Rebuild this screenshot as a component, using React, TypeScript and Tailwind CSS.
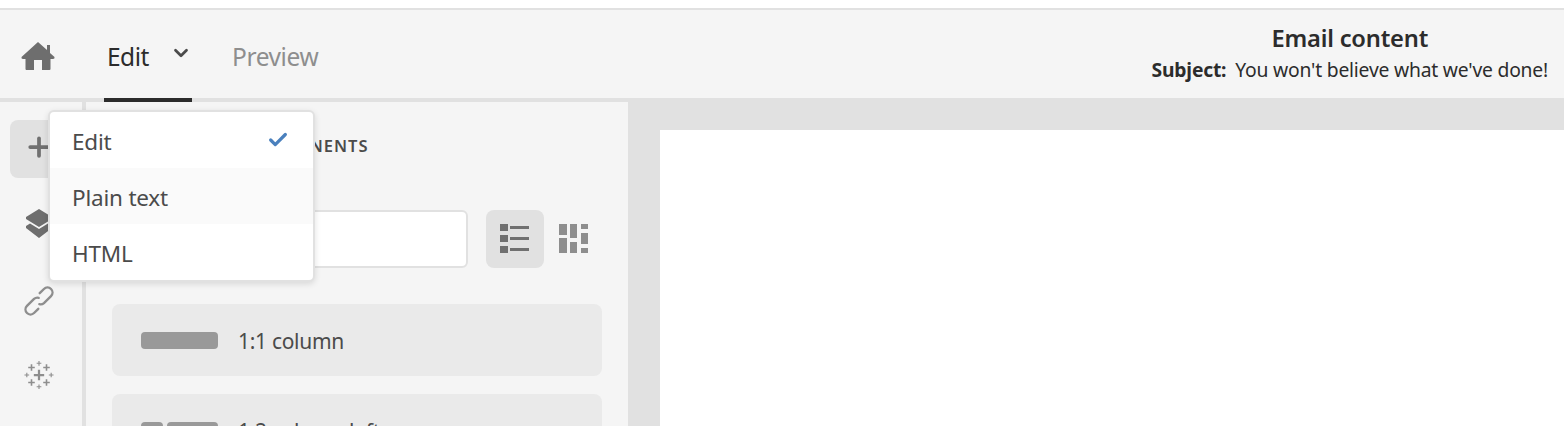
import React from 'react';
import { Check, ChevronDown, Plus } from 'lucide-react';

const font = { fontFamily: '"Noto Sans", sans-serif' };

const HomeIcon = () => (
  <svg width="34" height="30" viewBox="0 0 34 30" fill="#6e6e6e">
    <path d="M17 1 L26 9 V4 H29 V12 L33.500 16 Q34 18 32 18 H29.500 V28 Q29.500 29 28.500 29 H21 V19 H13 V29 H5.500 Q4.500 29 4.500 28 V18 H2 Q0 18 .5 16 Z" />
  </svg>
);

const LayersIcon = () => (
  <svg width="28" height="32" viewBox="0 0 28 32" fill="#6e6e6e">
    <path d="M14 1 L27 9 V11 L14 19 L1 11 V9 Z" />
    <path d="M1 18 L5 15.500 L14 21 L23 15.500 L27 18 V20 L14 30 L1 20 Z" />
  </svg>
);

const ChainIcon = () => (
  <svg width="30" height="30" viewBox="0 0 30 30" fill="none" stroke="#8e8e8e" strokeWidth="2.400" strokeLinecap="round">
    <g transform="rotate(-45 15 15)">
      <path d="M17 12.500a5 5 0 0 0-4-2.500H3a5 5 0 0 0 0 10H9" />
      <path d="M13 17.500a5 5 0 0 0 4 2.500H27a5 5 0 0 0 0-10H21" />
    </g>
  </svg>
);

const SparkleIcon = () => (
  <svg width="30" height="30" viewBox="0 0 32 32" fill="none" stroke="#8e8e8e" strokeLinecap="butt">
    <path d="M16 10.500v11M10.500 16h11" strokeWidth="2.400" />
    <path d="M8 4.500v7M4.500 8h7M24 4.500v7M20.500 8h7M8 20.500v7M4.500 24h7M24 20.500v7M20.500 24h7" strokeWidth="1.700" />
    <path d="M16 1v5M13.500 3.500h5M16 26v5M13.500 28.500h5M3 13.500v5M.5 16h5M29 13.500v5M26.500 16h5" strokeWidth="1.200" />
  </svg>
);

const ListIcon = () => (
  <svg width="30" height="30" viewBox="0 0 30 30" fill="#707070">
    <rect x="0" y="0" width="8" height="7" />
    <rect x="10" y="2" width="19" height="3" />
    <rect x="0" y="11" width="8" height="7" />
    <rect x="10" y="13" width="19" height="3" />
    <rect x="0" y="22" width="8" height="7" />
    <rect x="10" y="24" width="19" height="3" />
  </svg>
);

const GridIcon = () => (
  <svg width="30" height="30" viewBox="0 0 30 30" fill="#8e8e8e">
    <rect x="0" y="0" width="8" height="11" />
    <rect x="11" y="0" width="7" height="14" />
    <rect x="22" y="0" width="7" height="5" />
    <rect x="0" y="14" width="8" height="15" />
    <rect x="11" y="18" width="7" height="11" />
    <rect x="22" y="9" width="7" height="11" />
    <rect x="22" y="24" width="7" height="5" />
  </svg>
);

const menuItems = [
  { label: 'Edit', selected: true },
  { label: 'Plain text', hover: true },
  { label: 'HTML' },
];

export default function App() {
  return (
    <div style={font} className="relative flex h-screen w-full flex-col overflow-hidden bg-white">
      <div className="h-2 shrink-0 bg-white" />

      {/* Top bar */}
      <header className="flex h-[94px] shrink-0 border-t-2 border-b-4 border-[#e1e1e1] bg-[#f5f5f5]">
        <div className="flex w-[76px] items-center justify-center pt-[4px]">
          <HomeIcon />
        </div>
        <div className="relative ml-[28px] flex h-[88px] w-[88px] items-center pt-[6px] pl-[3px] text-[24.500px] tracking-[-0.5px] text-[#2c2c2c]">
          Edit
          <ChevronDown size={22} strokeWidth={3} className="mb-[8px] ml-[21px] shrink-0 text-[#4b4b4b]" />
          <div className="absolute bottom-[-4px] left-0 h-[4px] w-full bg-[#2c2c2c]" />
        </div>
        <div className="ml-[40px] flex items-center pt-[6px] text-[24.500px] tracking-[-0.4px] text-[#8e8e8e]">Preview</div>
        <div className="ml-auto flex flex-col items-center pt-[12px] pr-4">
          <div className="text-[23.700px] leading-[32px] font-semibold tracking-[-0.2px] text-[#2c2c2c]">Email content</div>
          <div className="mt-[2px] text-[19.300px] leading-[28px] tracking-[-0.2px] text-[#2c2c2c]">
            <span className="mr-[9px] font-bold">Subject:</span>You won't believe what we've done!
          </div>
        </div>
      </header>

      <div className="flex min-h-0 flex-1">
        {/* Rail */}
        <aside className="flex w-[86px] shrink-0 flex-col items-center border-r-4 border-[#e1e1e1] bg-[#f5f5f5] pt-[18px] pr-[4px]">
          <div className="flex h-[58px] w-[58px] items-center justify-center rounded-lg bg-[#e1e1e1]">
            <Plus size={30} strokeWidth={3} className="mb-[4px] text-[#707070]" />
          </div>
          <div className="mt-[30px]">
            <LayersIcon />
          </div>
          <div className="mt-[46px]">
            <ChainIcon />
          </div>
          <div className="mt-[44px]">
            <SparkleIcon />
          </div>
        </aside>

        {/* Components panel */}
        <section className="flex w-[542px] shrink-0 flex-col overflow-hidden bg-[#f5f5f5] px-[26px]">
          <h3 className="mt-[33px] h-[22px] pl-[70px] text-[16.500px] leading-[22px] font-semibold tracking-[1px] whitespace-nowrap text-[#4b4b4b]">
            EMAIL COMPONENTS
          </h3>
          <div className="mt-[53px] flex shrink-0 items-center">
            <div className="h-[58px] w-[356px] rounded-md border-2 border-[#e1e1e1] bg-white" />
            <div className="ml-[18px] flex h-[58px] w-[58px] items-center justify-center rounded-lg bg-[#e1e1e1]">
              <ListIcon />
            </div>
            <div className="ml-[15px] flex items-center">
              <GridIcon />
            </div>
          </div>
          <div className="mt-[36px] flex h-[72px] shrink-0 items-center rounded-lg bg-[#eaeaea] pl-[29px]">
            <div className="h-[17px] w-[77px] rounded-sm bg-[#999999]" />
            <span className="ml-[20px] pt-[3px] text-[21px] tracking-[-0.3px] text-[#4b4b4b]">1:1 column</span>
          </div>
          <div className="mt-[18px] flex h-[72px] shrink-0 items-center rounded-lg bg-[#eaeaea] pl-[29px]">
            <div className="h-[17px] w-[22px] rounded-sm bg-[#999999]" />
            <div className="ml-[4px] h-[17px] w-[51px] rounded-sm bg-[#999999]" />
            <span className="ml-[20px] pt-[3px] text-[21px] tracking-[-0.3px] text-[#4b4b4b]">1:2 column left</span>
          </div>
        </section>

        {/* Canvas */}
        <main className="min-w-0 flex-1 bg-[#e1e1e1] pt-[28px] pl-[32px]">
          <div className="h-full bg-white" />
        </main>
      </div>

      {/* Editor mode menu */}
      <div className="absolute top-[110px] left-[48px] w-[267px] rounded-md border-2 border-[#e1e1e1] bg-white shadow-[0_2px_6px_rgba(0,0,0,0.12)]">
        {menuItems.map((item) => (
          <div
            key={item.label}
            className={`flex h-[56px] items-center justify-between pt-[3px] pr-[24px] pl-[22px] text-[22.500px] tracking-[-0.2px] text-[#4b4b4b] ${item.hover ? 'bg-[#fafafa]' : ''}`}
          >
            {item.label}
            {item.selected && <Check size={22} strokeWidth={3.500} className="mb-[3px] text-[#4a80bd]" />}
          </div>
        ))}
      </div>
    </div>
  );
}
